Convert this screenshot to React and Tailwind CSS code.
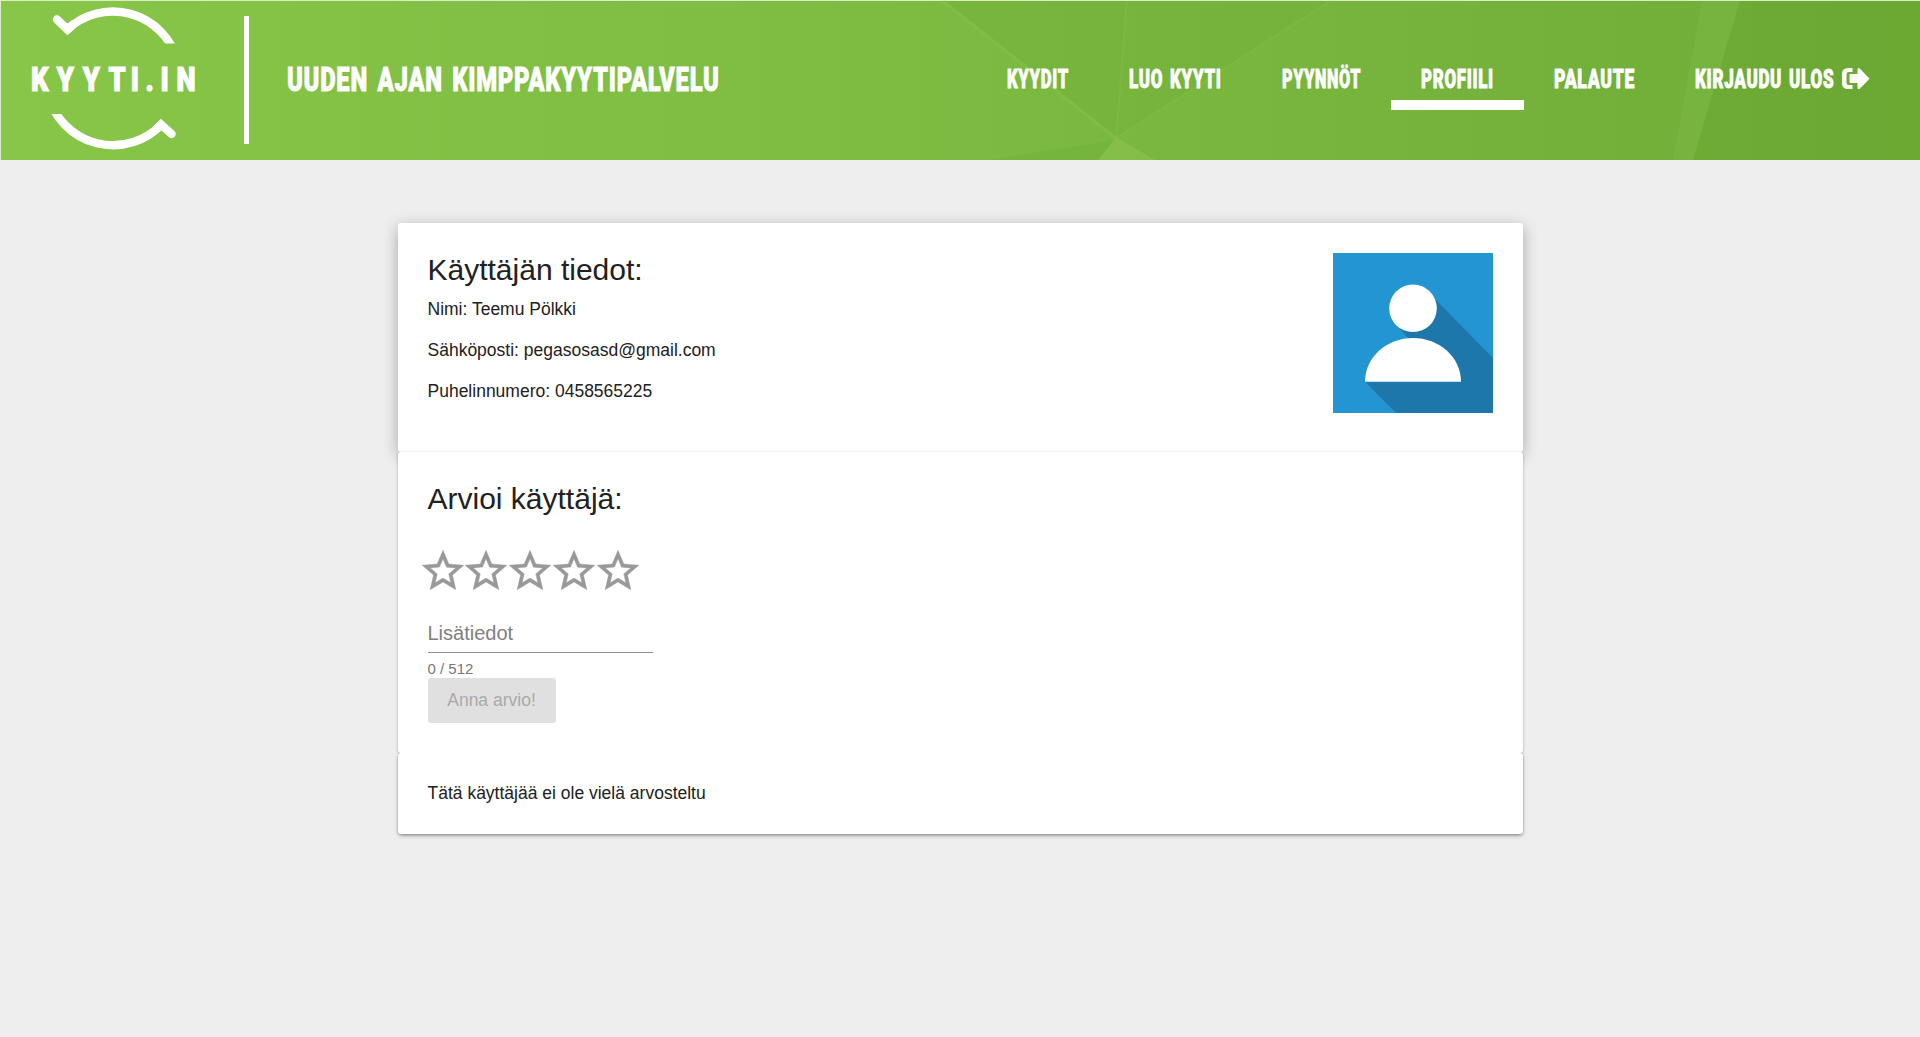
import { useLayoutEffect, useRef, useState } from "react";

// Display text squeezed horizontally to a given width.
function FitText({ width, className, children }) {
  const ref = useRef(null);
  const [scale, setScale] = useState(1);
  useLayoutEffect(() => {
    setScale(width / ref.current.offsetWidth);
  }, [width]);
  return (
    <span className="block" style={{ width }}>
      <span
        ref={ref}
        className={`inline-block origin-left whitespace-nowrap font-[Roboto,sans-serif] font-black uppercase text-white [-webkit-text-stroke:0.8px_white] ${className}`}
        style={{ transform: `scaleX(${scale})` }}
      >
        {children}
      </span>
    </span>
  );
}

function HeaderFacets() {
  return (
    <svg className="absolute -left-px -top-px" width="1920" height="160" viewBox="0 0 1920 160" fill="none" aria-hidden="true">
      <path d="M943 1L1116 138L1127 1Z" fill="#6aa834" fillOpacity=".22" />
      <path d="M1127 1L1116 138L1330 1Z" fill="#6aa834" fillOpacity=".12" />
      <path d="M1116 140L990 160H1098Z" fill="#69aa34" fillOpacity=".25" />
      <path d="M1116 137L1098 160H1155Z" fill="#8cc34f" fillOpacity=".6" />
      <path d="M943 1L1116 138" stroke="#8cc653" strokeOpacity=".4" strokeWidth="3" />
      <path d="M1127 1L1116 138L1330 1" stroke="#8cc653" strokeOpacity=".25" strokeWidth="2" />
      <path d="M1702 1H1740L1693 160H1673Z" fill="#84bd4b" fillOpacity=".35" />
      <path d="M1740 1H1920V160H1693Z" fill="#66a22f" fillOpacity=".35" />
    </svg>
  );
}

function Logo() {
  return (
    <svg className="block shrink-0" width="244" height="160" viewBox="0 0 244 160" fill="none" aria-label="KYYTI.IN">
      <clipPath id="logo-top"><rect width="244" height="43.5" /></clipPath>
      <clipPath id="logo-bottom"><rect y="114" width="244" height="46" /></clipPath>
      <g stroke="#fff" strokeWidth="8.4">
        <path clipPath="url(#logo-top)" d="M67.5 29.2A67 67 0 0 1 177 59" />
        <path clipPath="url(#logo-bottom)" d="M49 98A67 67 0 0 0 160.5 125.5" />
        <path d="M57 19.5L67.5 29.5L72 25.5" strokeLinecap="round" />
        <path d="M171.5 134L161 124.5L156.5 129" strokeLinecap="round" />
      </g>
      <text
        y="91.5"
        x="38.8 71 103.5 135.5 163.5 182 200.5 220.5"
        transform="scale(.8 1)"
        fill="#fff"
        stroke="#fff"
        strokeWidth="1.2"
        className="font-[Roboto,sans-serif] text-[34px] font-black"
      >
        KYYTI.IN
      </text>
    </svg>
  );
}

function LogoutIcon() {
  return (
    <svg className="ml-2 mt-[-3px] block shrink-0" width="28" height="22" viewBox="0 0 28 22" fill="#fff" aria-hidden="true">
      <path d="M10.5 0H6Q0 0 0 6V15Q0 21 6 21H10.5V17H6.5Q4.5 17 4.5 15V6Q4.5 4 6.5 4H10.5Z" />
      <path d="M16.5 0Q15.5 0 15.5 1.5V6H8.5Q7.5 6 7.5 7V14Q7.5 15 8.5 15H15.5V19.5Q15.5 22 18 20.5L27.5 10.8L18 .8Q17.3 0 16.5 0Z" />
    </svg>
  );
}

function Avatar() {
  return (
    <svg className="block shrink-0" width="160" height="160" viewBox="0 0 160 160" aria-label="Profiilikuva">
      <path d="M0 0H160V160H0Z" fill="#2395d3" />
      <path d="M102 46L160 105V160H63L32 128.5L76 86L66 75Z" fill="#1e77ab" />
      <circle cx="80" cy="55.3" r="23.8" fill="#fff" />
      <path d="M32 128.7C32 104 54 85 80 85S128 104 128 128.7Z" fill="#fff" />
    </svg>
  );
}

function Star() {
  return (
    <svg className="-mr-[6.2px] block shrink-0" width="50" height="50" viewBox="0 0 24 24" fill="#999" stroke="#999" strokeWidth=".2">
      <path d="M22 9.24l-7.19-.62L12 2 9.19 8.63 2 9.24l5.46 4.73L5.82 21 12 17.27 18.18 21l-1.63-7.03L22 9.24zM12 15.4l-3.76 2.27 1-4.28-3.32-2.88 4.38-.38L12 6.1l1.71 4.04 4.38.38-3.32 2.88 1 4.28L12 15.4z" />
    </svg>
  );
}

const NAV = [
  { label: "Kyydit", width: 62 },
  { label: "Luo kyyti", width: 93 },
  { label: "Pyynnöt", width: 79 },
  { label: "Profiili", width: 73, active: true },
  { label: "Palaute", width: 81 },
  { label: "Kirjaudu ulos", width: 139, logout: true },
];

export default function App() {
  return (
    <div className="min-h-[1037px] w-[1920px] overflow-hidden bg-[#eeeeee] font-['Liberation_Sans',Arial,sans-serif] text-[#212121]">
      <header className="relative h-40 border-l border-t border-[#dcecc8] bg-linear-to-r from-[#88c649] via-[#7cba41] to-[#6eac37]">
        <HeaderFacets />
        <div className="relative -ml-px -mt-px flex h-40">
          <Logo />
          <div className="mt-4 h-32 w-[5px] bg-white" />
          <div className="ml-[38px] mt-[60px]">
            <FitText width={433} className="text-[33px] leading-[40px] tracking-[1px] [word-spacing:4px]">Uuden ajan kimppakyytipalvelu</FitText>
          </div>
          <nav className="ml-auto mr-5 mt-[60px] flex">
            {NAV.map((item) => (
              <a key={item.label} className={`flex h-[50px] px-[30px] ${item.active ? "border-b-10 border-white" : ""}`}>
                <FitText width={item.width} className="text-[25px] leading-[40px] tracking-[1px] [word-spacing:3px]">{item.label}</FitText>
                {item.logout && <span className="flex h-10 items-center"><LogoutIcon /></span>}
              </a>
            ))}
          </nav>
        </div>
      </header>

      <main className="mx-auto mt-[63px] w-[1125px]">
        <section className="flex h-[229px] justify-between rounded-[3px] bg-white p-[30px] shadow-[0_4px_15px_rgba(0,0,0,0.3)]">
          <div>
            <h2 className="text-[30px] leading-[34px]">Käyttäjän tiedot:</h2>
            <div className="mt-[2px] text-[17.5px] leading-[41px]">
              <p>Nimi: Teemu Pölkki</p>
              <p>Sähköposti: pegasosasd@gmail.com</p>
              <p>Puhelinnumero: 0458565225</p>
            </div>
          </div>
          <Avatar />
        </section>

        <section className="relative h-[301px] rounded-[3px] bg-white px-[30px] pt-[30px] shadow-[0_1px_3px_rgba(0,0,0,0.3)]">
          <h2 className="text-[30px] leading-[34px]">Arvioi käyttäjä:</h2>
          <div className="-ml-[10px] mt-[30px] flex">
            {[1, 2, 3, 4, 5].map((n) => <Star key={n} />)}
          </div>
          <div className="mt-[22px] flex h-[35px] w-[225px] items-start border-b border-[#8f8f8f] text-[20px] leading-[30px] text-[#808080]">Lisätiedot</div>
          <p className="mt-[7px] h-[18px] text-[15px] leading-[17px] text-[#777]">0 / 512</p>
          <button className="block h-[45px] w-32 rounded-[3px] bg-[#e0e0e0] text-[17.5px] text-[#aaaaaa]" disabled>Anna arvio!</button>
        </section>

        <section className="relative h-[81px] rounded-[3px] bg-white px-[30px] pt-[30px] text-[17.5px] leading-[21px] shadow-[0_2px_4px_-1px_rgba(0,0,0,0.5),0_0_2px_rgba(0,0,0,0.2)] [clip-path:inset(0_-10px_-10px_-10px)]">
          Tätä käyttäjää ei ole vielä arvosteltu
        </section>
      </main>
    </div>
  );
}
